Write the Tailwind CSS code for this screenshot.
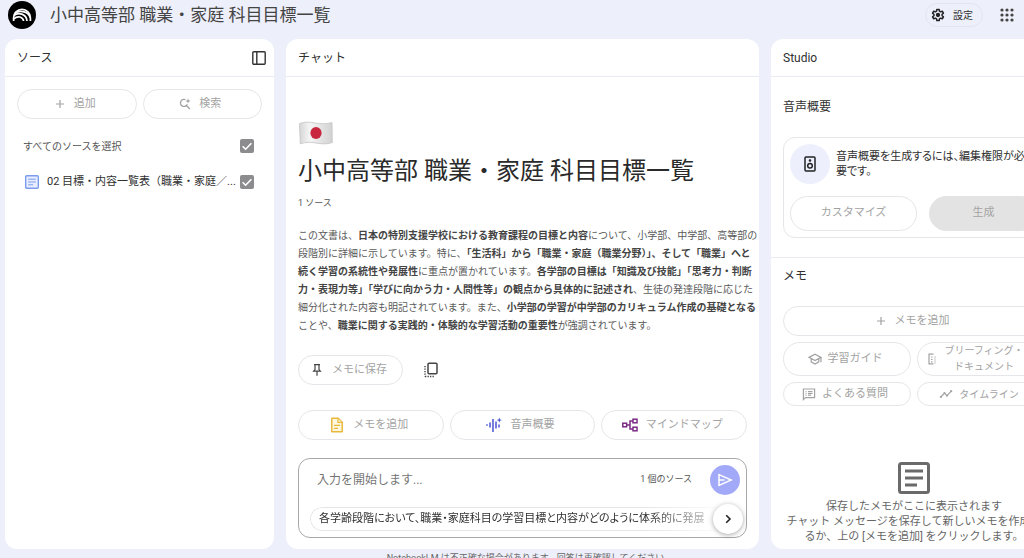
<!DOCTYPE html>
<html lang="ja" class="overflow-hidden">
<head>
  <meta charset="UTF-8">
  <meta name="viewport" content="width=device-width, initial-scale=1.0">
  <title>小中高等部 職業・家庭 科目目標一覧</title>
  <script src="https://cdn.jsdelivr.net/npm/@tailwindcss/browser@4"></script>
</head>
<body class="h-screen min-w-[1062px] overflow-hidden flex flex-col bg-[#edeffa] font-['Roboto','Noto_Sans_CJK_JP',sans-serif] text-[11px] text-[#303030]">
  <!-- Header -->
  <header class="h-[39px] shrink-0 flex items-start pl-2 pr-12">
    <a href="#" aria-label="ホーム" class="mt-px">
      <svg class="size-7" viewBox="0 0 28 28" fill="none" stroke="#fff" stroke-width="1.7">
        <circle cx="14" cy="14" r="14" fill="#000" stroke="none"/>
        <path d="M5.6 20v-3.2a8.4 8.4 0 0 1 16.8 0V20"/>
        <path d="M5.8 14.6c4.600-3.800 12.600-1.800 13.200 5.400"/>
        <path d="M6.800 12c6-3.600 14-1 15.400 4.800"/>
        <path d="M5.800 17.800c4-3.600 9.200-2 9.800 2.200"/>
      </svg>
    </a>
    <h1 class="ml-[14px] text-[17px] leading-[30px] text-[#444]">小中高等部 職業・家庭 科目目標一覧</h1>
    <div class="ml-auto h-[30px] flex items-center">
      <button class="h-6 w-[58px] flex items-center justify-center gap-2 pr-1 rounded-full border border-[#e2e4ee] text-[10px]">
        <svg class="size-[14px]" viewBox="0 0 24 24" fill="none" stroke="#202124" stroke-width="2.600" stroke-linejoin="round"><path d="M10 2.500h4l.5 2.900 2 1.200 2.800-1.100 2 3.500-2.300 1.800v2.400l2.300 1.800-2 3.500-2.800-1.100-2 1.200-.5 2.900h-4l-.5-2.900-2-1.200-2.800 1.100-2-3.500L5 13.200v-2.400L2.700 9l2-3.500 2.800 1.100 2-1.200z"/><circle cx="12" cy="12" r="2.400" fill="#202124"/></svg>
        設定
      </button>
      <button aria-label="アプリ" class="ml-[17px]">
        <svg class="size-[14px]" viewBox="0 0 14 14" fill="#444"><circle cx="2" cy="2" r="1.600"/><circle cx="7" cy="2" r="1.600"/><circle cx="12" cy="2" r="1.600"/><circle cx="2" cy="7" r="1.600"/><circle cx="7" cy="7" r="1.600"/><circle cx="12" cy="7" r="1.600"/><circle cx="2" cy="12" r="1.600"/><circle cx="7" cy="12" r="1.600"/><circle cx="12" cy="12" r="1.600"/></svg>
      </button>
    </div>
  </header>

  <main class="flex-1 min-h-0 flex gap-3 px-[5px]">
    <!-- Sources -->
    <section class="w-[269px] shrink-0 rounded-xl bg-white">
      <div class="h-[38px] flex items-center justify-between px-3 pr-2 border-b border-[#e9ebf2]">
        <h2 class="text-[12px]">ソース</h2>
        <button aria-label="パネルを閉じる">
          <svg class="size-[14px]" viewBox="0 0 14 14" fill="none" stroke="#333" stroke-width="1.400"><rect x=".8" y=".8" width="12.400" height="12.400" rx="1"/><path d="M4.800 1v12"/></svg>
        </button>
      </div>
      <div class="px-3 pt-3">
        <div class="grid grid-cols-2 gap-[6px] text-[#a3a3a3]">
          <button class="h-[30px] flex items-center justify-center gap-2 pr-1 rounded-full border border-[#e6e6ea]">
            <svg class="size-3" viewBox="0 0 12 12" stroke="currentColor" stroke-width="1.200"><path d="M6 2v8M2 6h8"/></svg>
            追加
          </button>
          <button class="h-[30px] flex items-center justify-center gap-2 pr-1 rounded-full border border-[#e6e6ea]">
            <svg class="size-3" viewBox="0 0 12 12" fill="none" stroke="currentColor" stroke-width="1.300"><path d="M6.400 1.700a3.500 3.500 0 1 0 1.800 4.500M7.200 7.200l3.600 3.800"/><path fill="currentColor" stroke="none" d="M9 .4l.7 1.900 1.900.7-1.900.7L9 5.600l-.7-1.900L6.400 3l1.900-.7z"/></svg>
            検索
          </button>
        </div>
        <div class="mt-[18px] h-[18px] flex items-center justify-between pl-[6px] pr-2 text-[#555]">
          <label for="all" class="text-[10px]">すべてのソースを選択</label>
          <span class="grid size-[14px]">
            <input id="all" type="checkbox" checked class="col-start-1 row-start-1 size-[14px] appearance-none rounded-xs bg-[#8c8c8e]">
            <svg class="col-start-1 row-start-1 pointer-events-none" viewBox="0 0 14 14" fill="none" stroke="#fff" stroke-width="1.600"><path d="M2.600 7.200l3 3 5.800-6"/></svg>
          </span>
        </div>
        <div class="mt-[18px] h-[18px] flex items-center pl-2 pr-2">
          <svg class="size-[14px] shrink-0" viewBox="0 0 14 14" fill="#e8eefd" stroke="#7c9cf0"><rect x=".7" y=".7" width="12.600" height="12.600" rx="1" stroke-width="1.400"/><path d="M3.200 4.200h7.600M3.200 7h7.600M3.200 9.800h5"/></svg>
          <label for="src" class="ml-2 flex-1 whitespace-nowrap">02 目標・内容一覧表（職業・家庭／...</label>
          <span class="grid size-[14px]">
            <input id="src" type="checkbox" checked class="col-start-1 row-start-1 size-[14px] appearance-none rounded-xs bg-[#8c8c8e]">
            <svg class="col-start-1 row-start-1 pointer-events-none" viewBox="0 0 14 14" fill="none" stroke="#fff" stroke-width="1.600"><path d="M2.600 7.200l3 3 5.800-6"/></svg>
          </span>
        </div>
      </div>
    </section>

    <!-- Chat -->
    <section class="flex-1 min-w-0 flex flex-col rounded-xl bg-white">
      <div class="h-[38px] shrink-0 flex items-center px-3 border-b border-[#e9ebf2]">
        <h2 class="text-[12px]">チャット</h2>
      </div>
      <div class="flex-1 flex flex-col px-3 pt-11 pb-[11px]">
        <svg class="w-9 h-6" viewBox="0 0 36 24">
          <defs><linearGradient id="cloth"><stop offset="0" stop-color="#d6d6d6"/><stop offset=".3" stop-color="#f4f4f4"/><stop offset=".6" stop-color="#e6e6e6"/><stop offset="1" stop-color="#d2d2d2"/></linearGradient></defs>
          <path d="M1.500 2.500c6-2 10-1.500 16-.5s11 1.200 16.500-.5l.3 20c-6 2-11 1.500-16.500.5s-10-1-15.500.8z" fill="url(#cloth)" stroke="#c4c4c4" stroke-width=".8"/>
          <ellipse cx="18" cy="12" rx="5.600" ry="6" fill="#c8253f"/>
        </svg>
        <h2 class="mt-[10px] text-[24px] leading-8 text-[#2a2a2a]">小中高等部 職業・家庭 科目目標一覧</h2>
        <p class="mt-[10px] text-[9px] leading-3 text-[#555]">1 ソース</p>
        <p class="mt-[18px] text-[10px] leading-[18px] whitespace-nowrap text-[#5a5a5a] [&_b]:text-[#444]">この文書は、<b>日本の特別支援学校における教育課程の目標と内容</b>について、小学部、中学部、高等部の<br>段階別に詳細に示しています。特に、<b>「生活科」から「職業・家庭（職業分野）」、そして「職業」へと<br>続く学習の系統性や発展性</b>に重点が置かれています。<b>各学部の目標は「知識及び技能」「思考力・判断<br>力・表現力等」「学びに向かう力・人間性等」の観点から具体的に記述され</b>、生徒の発達段階に応じた<br>細分化された内容も明記されています。また、<b>小学部の学習が中学部のカリキュラム作成の基礎となる</b><br>ことや、<b>職業に関する実践的・体験的な学習活動の重要性</b>が強調されています。</p>
        <div class="mt-5 flex items-center gap-5">
          <button class="h-[30px] w-[105px] flex items-center justify-center gap-2 pr-1 rounded-full border border-[#e6e6ea] text-[#a3a3a3]">
            <svg class="size-[14px]" viewBox="0 0 14 14" fill="none" stroke="#444" stroke-width="1.200"><path d="M4 1.600h6M5 1.600v5L3.600 8.200h6.800L9 6.600v-5M7 8.200v4.600"/></svg>
            メモに保存
          </button>
          <button aria-label="コピー">
            <svg class="size-4" viewBox="0 0 16 16" fill="none" stroke="#444"><rect x="5" y="1.200" width="9" height="10.600" rx="1" stroke-width="1.500"/><path d="M2 4v10.500M2 14.500h9.500" stroke-width="1.400" stroke-dasharray="1.300 1.200"/></svg>
          </button>
        </div>

        <div class="mt-auto grid grid-cols-3 gap-[6px] text-[#a3a3a3]">
          <button class="h-[30px] flex items-center justify-center gap-2 pr-1 rounded-full border border-[#e6e6ea]">
            <svg class="size-4" viewBox="0 0 16 16" fill="#fff8e0" stroke="#e8b93c" stroke-width="1.500"><path d="M2.800 1.200h6.400l4 4v9.600H2.800z" stroke-linejoin="round"/><path d="M9 1.400v4h4M5 8.400h6M5 11.400h4" stroke-width="1.300"/></svg>
            メモを追加
          </button>
          <button class="h-[30px] flex items-center justify-center gap-2 pr-1 rounded-full border border-[#e6e6ea]">
            <svg class="size-4" viewBox="0 0 16 16" fill="none" stroke="#4a55d4" stroke-width="1.500"><path d="M1 7.200v1.600M4 5.500v5M7 2v13M10 4.500v7M13 7.500v3"/><path d="M13.300.4l.7 2 2 .7-2 .7-.7 2-.7-2-2-.7 2-.7z" fill="#4a55d4" stroke="none"/></svg>
            音声概要
          </button>
          <button class="h-[30px] flex items-center justify-center gap-2 pr-1 rounded-full border border-[#e6e6ea]">
            <svg class="size-4" viewBox="0 0 16 16" fill="none" stroke="#7b2d83" stroke-width="1.500"><rect x=".8" y="6.200" width="3.800" height="3.600"/><rect x="11" y="2.200" width="4" height="3.600"/><rect x="11" y="10.200" width="4" height="3.600"/><path d="M4.600 8H8M11 4H8v8h3"/></svg>
            マインドマップ
          </button>
        </div>

        <!-- Query box -->
        <form class="mt-[18px] h-[80px] rounded-xl border border-[#a8a8a8] pt-[6px] pl-[11px] pr-[6px] relative">
          <div class="flex items-center">
            <input type="text" aria-label="入力" placeholder="入力を開始します..." class="flex-1 min-w-0 pl-[7px] text-[12px] outline-none placeholder:text-[#757575]">
            <span class="mr-[18px] text-[9px] text-[#555]">1 個のソース</span>
            <button type="button" aria-label="送信" class="size-[30px] flex items-center justify-center rounded-full bg-[#a2a9f8]">
              <svg class="size-4" viewBox="0 0 16 16" fill="none" stroke="#fff" stroke-width="1.500"><path d="M2 2.600L14.200 8 2 13.400zM2 8h5.500"/></svg>
            </button>
          </div>
          <button type="button" class="mt-3 h-6 w-[420px] max-w-full whitespace-nowrap rounded-l-full border border-r-0 border-[#e6e6ea] pl-2 text-left [font-feature-settings:'palt'] [mask-image:linear-gradient(to_right,#000_80%,transparent_100%)]">各学齢段階において、職業・家庭科目の学習目標と内容がどのように体系的に発展</button>
          <button type="button" aria-label="次へ" class="absolute right-[3px] bottom-[3px] size-[30px] flex items-center justify-center rounded-full bg-white shadow-[0_1px_5px_rgba(0,0,0,0.35)]">
            <svg class="size-3" viewBox="0 0 12 12" fill="none" stroke="#222" stroke-width="1.600"><path d="M4.200 2.200L8 6l-3.800 3.800"/></svg>
          </button>
        </form>
      </div>
    </section>

    <!-- Studio -->
    <section class="w-[286px] shrink-0 flex flex-col rounded-xl bg-white">
      <div class="h-[38px] shrink-0 flex items-center px-3 border-b border-[#e9ebf2]">
        <h2 class="text-[12px]">Studio</h2>
      </div>
      <div class="px-3 pt-[21px] pb-[19px] border-b border-[#e9ebf2]">
        <h3 class="text-[12px] leading-[18px]">音声概要</h3>
        <div class="mt-[21px] rounded-xl border border-[#e6e6ea] p-[6px]">
          <div class="flex gap-[6px]">
            <span class="size-10 shrink-0 flex items-center justify-center rounded-full bg-[#edf0fc]">
              <svg class="size-4" viewBox="0 0 16 16" fill="none" stroke="#222" stroke-width="1.500"><rect x="3" y="1" width="10" height="14" rx="1"/><circle cx="8" cy="9.800" r="2.300"/><circle cx="8" cy="4.500" r=".6"/></svg>
            </span>
            <p class="pt-[5px] leading-[15px] whitespace-nowrap [font-feature-settings:'palt']">音声概要を生成するには、編集権限が必<br>要です。</p>
          </div>
          <div class="mt-3 flex gap-3 text-[#a3a3a3]">
            <button class="h-[35px] w-[127px] rounded-full border border-[#e6e6ea]">カスタマイズ</button>
            <button class="h-[35px] flex-1 rounded-full bg-[#e3e3e3]">生成</button>
          </div>
        </div>
      </div>
      <div class="flex-1 flex flex-col px-3 pt-[9px] pb-[5px]">
        <h3 class="text-[12px] leading-[18px]">メモ</h3>
        <div class="mt-[21px] grid grid-cols-2 gap-[6px] text-[#a3a3a3]">
          <button class="col-span-2 h-[30px] flex items-center justify-center gap-2 pr-1 rounded-full border border-[#e6e6ea]">
            <svg class="size-3" viewBox="0 0 12 12" stroke="currentColor" stroke-width="1.200"><path d="M6 2v8M2 6h8"/></svg>
            メモを追加
          </button>
          <button class="h-[34px] flex items-center justify-center gap-[6px] pr-1 rounded-full border border-[#e6e6ea]">
            <svg class="size-[14px]" viewBox="0 0 14 14" fill="none" stroke="currentColor" stroke-width="1.200"><path d="M1 5.400L7 2.200l6 3.200-6 3.200zM3.200 6.600v3.200L7 12l3.800-2.200V6.600M13 5.400v4.800"/></svg>
            学習ガイド
          </button>
          <button class="h-[34px] flex items-center justify-center gap-[6px] pr-3 rounded-full border border-[#e6e6ea] text-[10px] leading-4">
            <svg class="size-3" viewBox="0 0 12 12" fill="none" stroke="currentColor" stroke-width="1.200"><path d="M7.500 1.200H3v9.600h4.500M5 4h1.500M5 6.500h1.500M5 8.800h1.500"/><path d="M9 3.500v7.500" stroke-dasharray="1 1"/></svg>
            <span class="whitespace-nowrap">ブリーフィング・<br>ドキュメント</span>
          </button>
          <button class="h-6 flex items-center justify-center gap-[6px] pr-1 rounded-full border border-[#e6e6ea]">
            <svg class="size-[14px]" viewBox="0 0 14 14" fill="none" stroke="currentColor" stroke-width="1.200"><path d="M1.400 12.600V2h11.200v8.600H3.400zM3.500 4.500h1M3.500 6.300h1M3.500 8.100h1M6 4.500h4.500M6 6.300h4.500M6 8.100h3"/></svg>
            よくある質問
          </button>
          <button class="h-6 flex items-center justify-center gap-[6px] pr-1 rounded-full border border-[#e6e6ea] text-[10px]">
            <svg class="size-[14px]" viewBox="0 0 14 14" fill="none" stroke="currentColor" stroke-width="1.200"><path d="M1.800 10l3.700-4L8 8.600l4.200-4.400"/><g fill="currentColor" stroke="none"><circle cx="1.800" cy="10" r="1.100"/><circle cx="5.500" cy="6" r="1.100"/><circle cx="8" cy="8.600" r="1.100"/><circle cx="12.200" cy="4.200" r="1.100"/></g></svg>
            タイムライン
          </button>
        </div>
        <div class="mt-auto flex flex-col items-center text-center text-[#666]">
          <svg class="size-8" viewBox="0 0 32 32" fill="none" stroke="#6a6a6a" stroke-width="3"><rect x="1.500" y="1.500" width="29" height="29" rx="2"/><path d="M7 9h18M7 16h18M7 23h12"/></svg>
          <p class="mt-[5px] leading-[15px] whitespace-nowrap">保存したメモがここに表示されます<br>チャット メッセージを保存して新しいメモを作成す<br>るか、上の [メモを追加] をクリックします。</p>
        </div>
      </div>
    </section>
  </main>

  <footer class="h-[9px] shrink-0 pl-[286px] pr-[288px] pt-[3px] text-center text-[9px] leading-3 text-[#666]">NotebookLM は不正確な場合があります。回答は再確認してください。</footer>
</body>
</html>
